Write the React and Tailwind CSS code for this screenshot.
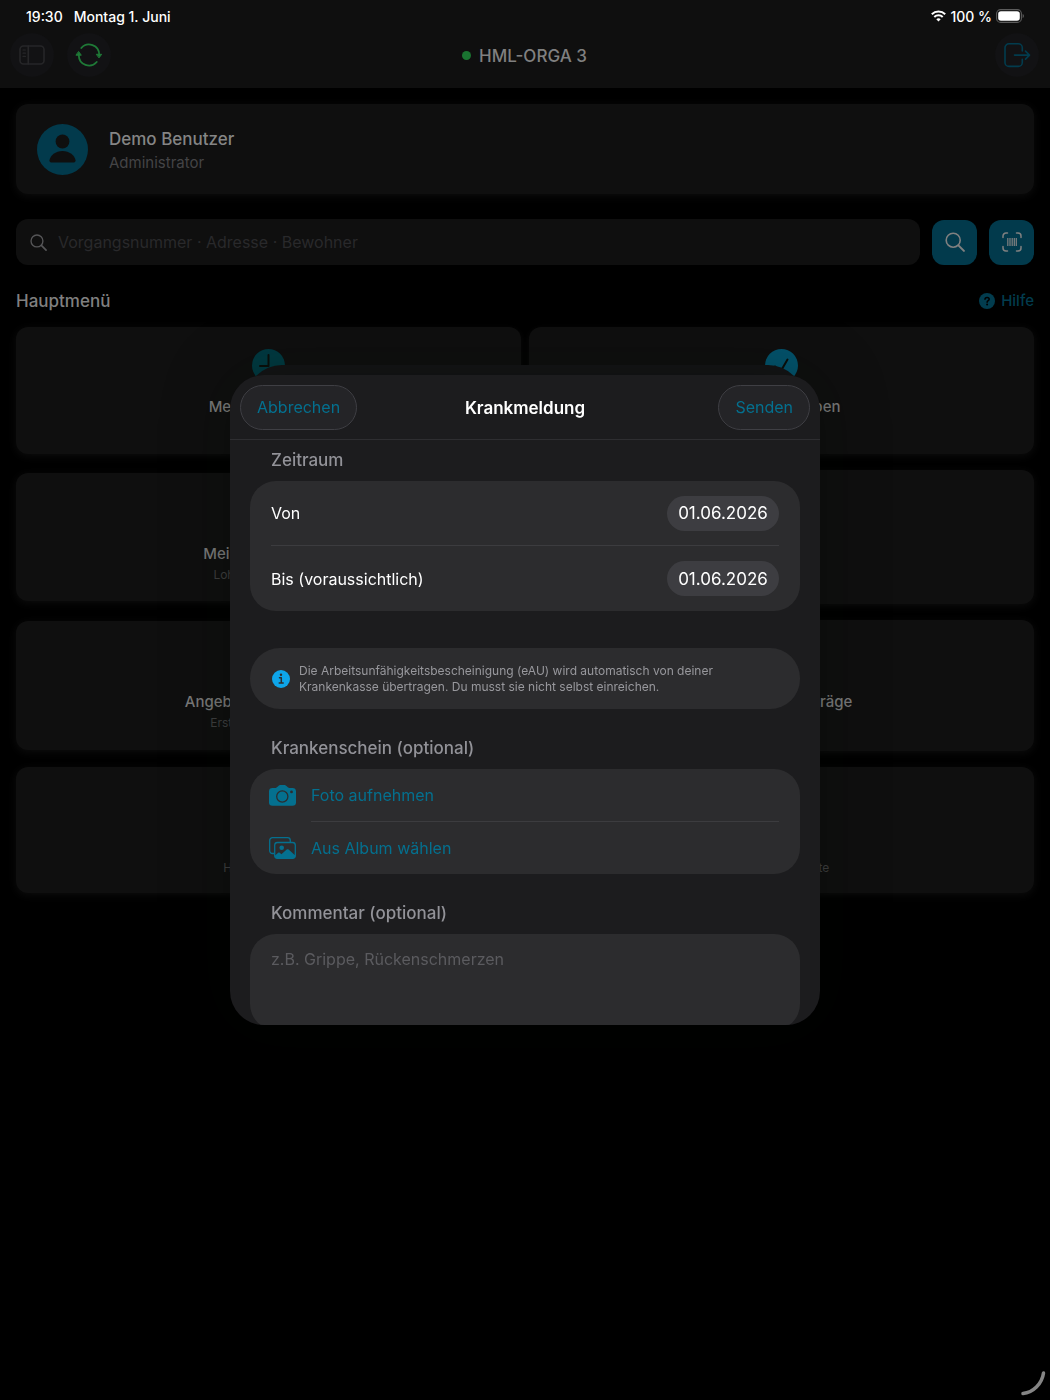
const tiles = [
  { title: "Meine Schichten", icon: "clock" },
  { title: "Meine Aufgaben", icon: "check" },
  { title: "Meine Dokumente", sub: "Lohnabrechnungen" },
  { title: "Kalender" },
  { title: "Angebote und Aufträge", sub: "Erstellen, bearbeiten" },
  { title: "Alle Urlaubsanträge" },
  { title: "Hilfe", sub: "Hinweise, Tipps" },
  { title: "Team", sub: "Termine, Dienste" },
];

const heights = [
  "h-[127px]", "h-[127px]",
  "h-[128px]", "h-[134px]",
  "h-[129px]", "h-[131px]",
  "h-[126px]", "h-[126px]",
];

const SidebarIcon = () => (
  <svg width="26" height="20" viewBox="0 0 26 20" fill="none" stroke="currentColor" strokeWidth="1.6" strokeLinecap="round">
    <rect x="1" y="1" width="24" height="18" rx="3.5" />
    <path d="M9.3 1v18" />
    <path d="M4 5h2.4M4 8.2h2.4M4 11.4h2.4" strokeWidth="1.2" />
  </svg>
);

const RefreshIcon = () => (
  <svg width="28" height="26" viewBox="0 0 28 26" fill="none" stroke="currentColor" strokeWidth="1.8" strokeLinecap="round">
    <path d="M6.3 6A10.2 10.2 0 0 1 24.2 12.5" />
    <path d="M21.7 20A10.2 10.2 0 0 1 3.8 13.5" />
    <path d="M21.7 12.3h5L24.2 15.6z" fill="currentColor" strokeWidth="1" strokeLinejoin="round" />
    <path d="M1.3 13.2h5L3.8 9.8z" fill="currentColor" strokeWidth="1" strokeLinejoin="round" />
  </svg>
);

const LogoutIcon = () => (
  <svg width="28" height="26" viewBox="0 0 28 26" fill="none" stroke="currentColor" strokeWidth="1.6" strokeLinecap="round" strokeLinejoin="round">
    <path d="M19.3 9V5.8a4 4 0 0 0-4-4H6a4 4 0 0 0-4 4v14.600a4 4 0 0 0 4 4h9.300a4 4 0 0 0 4-4V17.200" />
    <path d="M11.500 13.100h15M22.500 9.100l4 4-4 4" />
  </svg>
);

const WifiIcon = () => (
  <svg width="15" height="12" viewBox="0 0 15 12" fill="none" stroke="currentColor" strokeWidth="2">
    <path d="M.8 4.3a9.6 9.6 0 0 1 13.4 0" />
    <path d="M3.3 7a6 6 0 0 1 8.4 0" />
    <path d="M7.5 11.5L5.3 9.3a3.1 3.1 0 0 1 4.4 0z" fill="currentColor" stroke="none" />
  </svg>
);

const BatteryIcon = () => (
  <svg width="28" height="14" viewBox="0 0 28 14" fill="none">
    <rect x=".6" y=".6" width="24.8" height="12.8" rx="4" stroke="#5c5c5c" strokeWidth="1.1" />
    <rect x="2.2" y="2.2" width="21.6" height="9.6" rx="2.8" fill="#fff" />
    <path d="M26.6 5v4c.8-.3 1.3-1.1 1.3-2s-.5-1.7-1.3-2z" fill="#5c5c5c" />
  </svg>
);

const UserIcon = () => (
  <svg width="51" height="51" viewBox="0 0 51 51">
    <circle cx="25.5" cy="25.5" r="25.5" fill="#023a4c" />
    <circle cx="25.5" cy="17.5" r="6.9" fill="#0f0f0f" />
    <path d="M15 38.5c-1.7 0-2.7-.8-2.5-2.3C13.2 31.5 18.6 27 25.5 27s12.3 4.5 13 9.2c.2 1.5-.8 2.3-2.5 2.3z" fill="#0f0f0f" />
  </svg>
);

const SearchIcon = ({ size }) => (
  <svg className="shrink-0" width={size} height={size} viewBox="0 0 20 20" fill="none" stroke="currentColor" strokeWidth="1.6" strokeLinecap="round">
    <circle cx="8.2" cy="8.2" r="7" />
    <path d="M13.4 13.4l5.5 5.5" strokeWidth="2" />
  </svg>
);

const BarcodeIcon = () => (
  <svg width="20" height="20" viewBox="0 0 20 20" fill="none" stroke="#808080" strokeWidth="1.5" strokeLinecap="round">
    <path d="M1 5.5V4a3 3 0 0 1 3-3h1.5M14.5 1H16a3 3 0 0 1 3 3v1.5M19 14.5V16a3 3 0 0 1-3 3h-1.5M5.5 19H4a3 3 0 0 1-3-3v-1.5" />
    <path d="M5.8 6v8M8 6v8M10.2 6v8M12.3 6v8M14.3 6v8" strokeWidth="1.2" strokeLinecap="butt" />
  </svg>
);

const HelpIcon = () => (
  <svg width="16" height="16" viewBox="0 0 16 16" fill="none">
    <circle cx="8" cy="8" r="8" fill="#023c4e" />
    <path d="M6 6.3c0-1.2.9-1.9 2.1-1.9s2.1.7 2.1 1.8c0 1.3-2.1 1.5-2.1 3" stroke="#000" strokeWidth="1.5" strokeLinecap="round" />
    <circle cx="8.1" cy="11.6" r="1" fill="#000" />
  </svg>
);

const TileIcon = ({ name }) => (
  <svg width="33" height="33" viewBox="0 0 33 33" fill="none" strokeWidth="2" strokeLinecap="round" strokeLinejoin="round">
    <circle cx="16.5" cy="16.5" r="16.5" fill={name === "clock" ? "#003a42" : "#03546e"} />
    <path d={name === "check" ? "M10 17.5l5 6L22.5 10.5" : "M16.5 6v11H8"} stroke="#0b0e0b" />
  </svg>
);

const InfoIcon = () => (
  <svg className="shrink-0" width="18" height="18" viewBox="0 0 18 18" fill="none" stroke="#2c2c2e" strokeLinecap="round">
    <circle cx="9" cy="9" r="9" fill="#0ea5e9" stroke="none" />
    <path d="M7.5 7.8h1.8v5M7.2 13h4" strokeLinejoin="round" strokeWidth="1.5" />
    <circle cx="9" cy="4.7" r="1.2" fill="#2c2c2e" stroke="none" />
  </svg>
);

const CameraIcon = () => (
  <svg width="27" height="21" viewBox="0 0 27 21">
    <path
      d="M3.5 2.9h3.2c.7 0 1.1-.3 1.6-.8l1-1C10 .4 10.6 0 11.6 0h3.600c1 0 1.6.4 2.3 1.1l1 1c.5.5.9.8 1.6.8h3.400C25.700 2.900 27 4.100 27 6.200v11.300c0 2.100-1.300 3.300-3.500 3.300h-20C1.300 20.800 0 19.600 0 17.500V6.200c0-2.100 1.300-3.300 3.500-3.300z"
      fill="#04708f"
    />
    <circle cx="13.3" cy="11.5" r="5.6" fill="none" stroke="#2c2c2e" strokeWidth="1.3" />
    <circle cx="22.5" cy="6.9" r="1.4" fill="#2c2c2e" />
  </svg>
);

const AlbumIcon = () => (
  <svg width="27" height="22" viewBox="0 0 27 22" fill="none" stroke="#04708f" strokeWidth="1.3">
    <path d="M5 16.5H3.500a2.800 2.800 0 0 1-2.800-2.800V3.500A2.800 2.800 0 0 1 3.500.7h15a2.800 2.800 0 0 1 2.800 2.800v1.700" />
    <rect x="5.7" y="5.5" width="20.6" height="15.8" rx="2.8" />
    <circle cx="12.7" cy="10.8" r="2.3" fill="#04708f" stroke="none" />
    <path d="M6 18.5l3.2-2.8c.5-.4 1-.4 1.5 0l1.7 1.5 5.3-4.7c.6-.5 1.3-.5 1.9 0l6.700 5.900v1.100c0 1.200-.8 1.800-2 1.800H7.700c-1.200 0-1.700-.6-1.700-1.800z" fill="#04708f" stroke="none" />
  </svg>
);

const Header = () => (
  <header className="bg-[#0f0f0f] pb-[10px]">
    <div className="flex h-8 items-center justify-between pl-[26px] pr-[26px] text-[14px] font-medium text-white">
      <div className="flex gap-[11px]">
        <span>19:30</span>
        <span>Montag 1. Juni</span>
      </div>
      <div className="flex items-center gap-1">
        <WifiIcon />
        <span>100 %</span>
        <BatteryIcon />
      </div>
    </div>
    <div className="grid h-[46px] grid-cols-[1fr_auto_1fr] items-center pr-[11px] pl-[10px]">
      <div className="flex gap-[13px]">
        <button aria-label="Seitenleiste" className="flex size-11 items-center justify-center rounded-full bg-[#121214] text-[#262628]">
          <SidebarIcon />
        </button>
        <button aria-label="Synchronisieren" className="flex size-11 items-center justify-center rounded-full bg-[#121214] text-[#1f7a37]">
          <RefreshIcon />
        </button>
      </div>
      <h1 className="flex items-center gap-2 text-[17px] leading-6 font-medium text-[#808080]">
        <span className="size-[9px] rounded-full bg-[#1a7431]" />
        <span className="pt-[2px]">HML-ORGA 3</span>
      </h1>
      <button aria-label="Abmelden" className="flex size-11 items-center justify-center justify-self-end rounded-full bg-[#121214] text-[#023c4e]">
        <LogoutIcon />
      </button>
    </div>
  </header>
);

const Tile = ({ title, sub, icon, height }) => (
  <button
    className={`flex flex-col items-center justify-center rounded-xl bg-[#0f0f0f] pt-1 shadow-[0_2px_10px_rgba(255,255,255,0.05)] ${height}`}
  >
    <TileIcon name={icon} />
    <span className="mt-[15px] h-5 text-[15px] leading-5 font-medium text-[#7a7a7a]">{title}</span>
    <span className="mt-[3px] h-4 text-[12px] leading-4 text-[#3f3f40]">{sub}</span>
  </button>
);

const Home = () => (
  <main className="px-4 pt-4">
    <section className="flex h-[90px] items-center gap-[21px] rounded-xl bg-[#0f0f0f] pl-[21px] shadow-[0_2px_10px_rgba(255,255,255,0.05)]">
      <UserIcon />
      <div className="pt-[3px]">
        <p className="text-[17px] leading-6 font-medium text-[#858585]">Demo Benutzer</p>
        <p className="text-[15px] leading-6 text-[#444446]">Administrator</p>
      </div>
    </section>

    <div className="mt-[25px] flex items-center gap-3">
      <label className="flex h-[46px] flex-1 items-center gap-[11px] rounded-xl bg-[#0f0f0f] px-[14px] text-[#555557]">
        <SearchIcon size={17} />
        <input
          type="search"
          aria-label="Suche"
          placeholder="Vorgangsnummer · Adresse · Bewohner"
          className="h-6 w-full bg-transparent text-[16px] leading-6 outline-none placeholder:text-[#29292b]"
        />
      </label>
      <button aria-label="Suchen" className="flex size-[45px] items-center justify-center rounded-xl bg-[#023a4c] text-[#808080]">
        <SearchIcon size={20} />
      </button>
      <button aria-label="Barcode scannen" className="flex size-[45px] items-center justify-center rounded-xl bg-[#023a4c]">
        <BarcodeIcon />
      </button>
    </div>

    <div className="mt-6 mb-[14px] flex h-6 items-center justify-between">
      <h2 className="text-[17px] leading-6 font-medium text-[#808080]">Hauptmenü</h2>
      <a href="#hilfe" className="flex items-center gap-[6px] text-[15px] leading-6 font-medium text-[#023c4e]">
        <HelpIcon />
        Hilfe
      </a>
    </div>

    <div className="grid grid-cols-2 items-center gap-x-2 gap-y-4">
      {tiles.map((tile, i) => (
        <Tile key={tile.title} {...tile} height={heights[i]} />
      ))}
    </div>
  </main>
);

const DateRow = ({ id, label }) => (
  <div className="flex h-[65px] items-center justify-between">
    <label htmlFor={id}>{label}</label>
    <input
      id={id}
      type="text"
      defaultValue="01.06.2026"
      className="h-[35px] w-[112px] rounded-full bg-[#3d3d41] text-center text-[17px] outline-none"
    />
  </div>
);

const SectionTitle = ({ children }) => (
  <h3 className="mb-[9px] px-[21px] text-[17px] leading-6 font-medium text-[#929298]">{children}</h3>
);

const SickNoteDialog = () => (
  <div className="fixed inset-0 flex items-center justify-center">
    <div role="dialog" aria-labelledby="dialog-title" className="relative w-[590px] max-w-full">
      {/* Sheet stacked behind */}
      <div className="absolute inset-x-4 -top-[10px] h-20 rounded-t-[36px] bg-[#141416]" />

      <form className="relative flex h-[650px] flex-col overflow-hidden rounded-[34px] bg-[#1c1c1e] text-[16px] leading-6 text-white shadow-[0_0_60px_10px_rgba(0,12,0,0.25)]">
        <div className="grid h-[65px] shrink-0 grid-cols-[1fr_auto_1fr] items-center border-b border-[#2e2e31] px-[10px]">
          <button type="button" className="h-[45px] justify-self-start rounded-full border border-[#3f3f44] bg-[#242427] px-4 text-[#04708f]">
            Abbrechen
          </button>
          <h2 id="dialog-title" className="pt-[2px] text-[17px] font-semibold">Krankmeldung</h2>
          <button type="submit" className="h-[45px] justify-self-end rounded-full border border-[#3f3f44] bg-[#242427] px-4 text-[#04708f]">
            Senden
          </button>
        </div>

        <div className="flex-1 overflow-hidden px-5 pt-2">
          <SectionTitle>Zeitraum</SectionTitle>
          <div className="divide-y divide-[#3c3c3f] rounded-[26px] bg-[#2c2c2e] px-[21px]">
            <DateRow id="von" label="Von" />
            <DateRow id="bis" label="Bis (voraussichtlich)" />
          </div>

          <div className="mt-[37px] mb-[27px] flex h-[61px] items-center gap-[9px] rounded-[30px] bg-[#2c2c2e] px-[22px]">
            <InfoIcon />
            <p className="text-[12px] leading-4 text-[#98989d]">
              Die Arbeitsunfähigkeitsbescheinigung (eAU) wird automatisch von deiner
              <br />
              Krankenkasse übertragen. Du musst sie nicht selbst einreichen.
            </p>
          </div>

          <SectionTitle>Krankenschein (optional)</SectionTitle>
          <div className="mb-[27px] rounded-[26px] bg-[#2c2c2e] pr-[21px] pl-[19px] text-[#04708f]">
            <button type="button" className="flex w-full items-center gap-[15px]">
              <CameraIcon />
              <span className="flex h-[53px] flex-1 items-center border-b border-[#3c3c3f]">Foto aufnehmen</span>
            </button>
            <button type="button" className="flex w-full items-center gap-[15px]">
              <AlbumIcon />
              <span className="flex h-[52px] flex-1 items-center">Aus Album wählen</span>
            </button>
          </div>

          <SectionTitle>
            <label htmlFor="kommentar">Kommentar (optional)</label>
          </SectionTitle>
          <textarea
            id="kommentar"
            placeholder="z.B. Grippe, Rückenschmerzen"
            className="block h-24 w-full resize-none rounded-[26px] bg-[#2c2c2e] px-[21px] pt-[13px] outline-none placeholder:text-[#5b5b5f]"
          />
        </div>
      </form>
    </div>
  </div>
);

export default function App() {
  return (
    <div className="min-h-screen bg-black font-[Inter,sans-serif]">
      <Header />
      <Home />
      <SickNoteDialog />
      <svg className="fixed right-1 bottom-1" width="26" height="26" viewBox="0 0 26 26" fill="none" stroke="#858585" strokeWidth="3.5" strokeLinecap="round">
        <path d="M3 23.5C13 22.5 22 14 23.5 3" />
      </svg>
    </div>
  );
}
